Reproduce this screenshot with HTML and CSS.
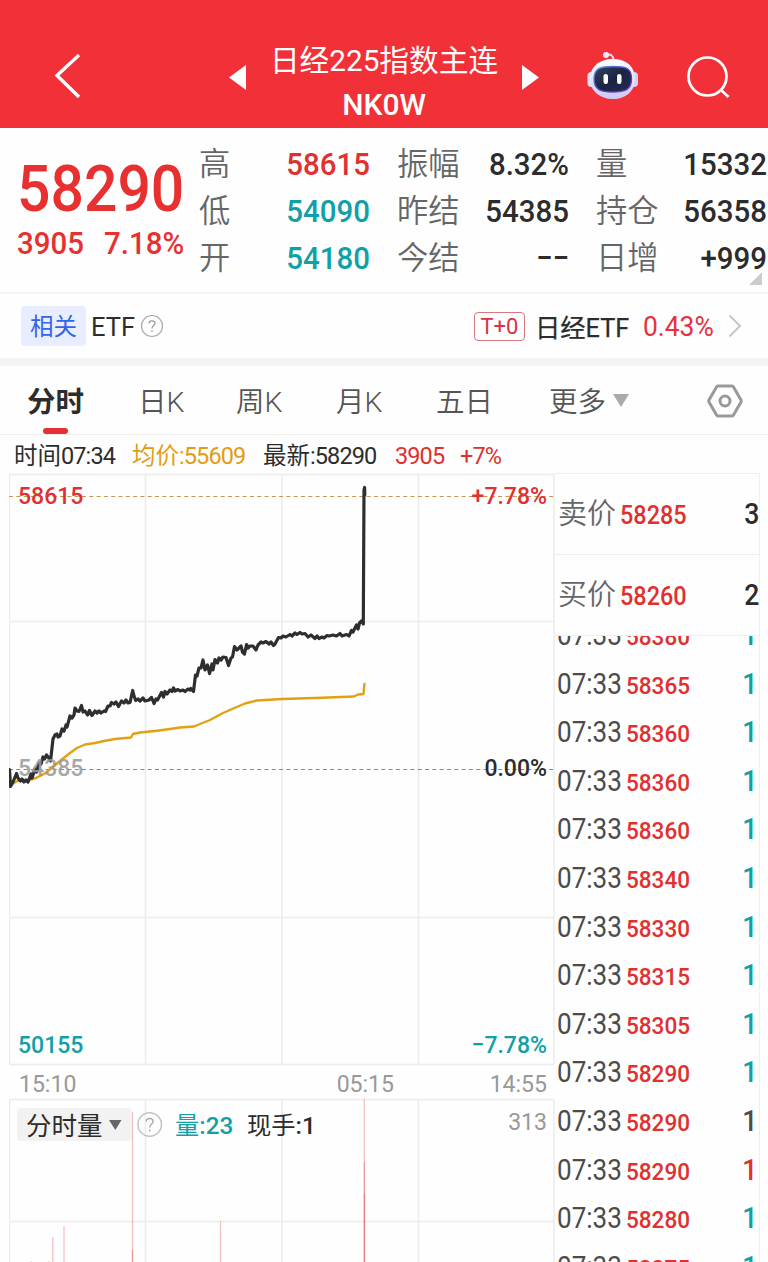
FILE: index.html
```html
<!DOCTYPE html>
<html lang="zh-CN">
<head>
<meta charset="utf-8">
<title>日经225指数主连</title>
<link rel="stylesheet" href="styles.css">
</head>
<body>
<div class="screen">
  <header class="topbar">
    <svg class="back" viewBox="0 0 30 48"><path d="M26 3 4 23.5 26 45" fill="none" stroke="#fff" stroke-width="3.4"/></svg>
    <svg class="prev" viewBox="0 0 17 25"><path d="M17 0V25L0 12.500z" fill="#fff"/></svg>
    <div class="title"><div>日经225指数主连</div><div class="code">NK0W</div></div>
    <svg class="next" viewBox="0 0 17 25"><path d="M0 0V25L17 12.500z" fill="#fff"/></svg>
    <svg class="robot" viewBox="0 0 54 50">
      <defs>
        <linearGradient id="shell" x1="0" y1="0" x2="0" y2="1"><stop offset="0" stop-color="#fff"/><stop offset="1" stop-color="#cbc9f2"/></linearGradient>
        <linearGradient id="face" x1="0" y1="0" x2="1" y2="1"><stop offset="0" stop-color="#34435f"/><stop offset=".5" stop-color="#1c2444"/><stop offset="1" stop-color="#222b50"/></linearGradient>
        <linearGradient id="rim" x1="0" y1="0" x2="1" y2="1"><stop offset="0" stop-color="#55a8e0"/><stop offset=".6" stop-color="#5934c4"/><stop offset="1" stop-color="#8c3ee0"/></linearGradient>
      </defs>
      <path d="M20 5Q27 3 27.500 10" fill="none" stroke="#ecdff5" stroke-width="2"/>
      <circle cx="20" cy="5" r="3" fill="#f4e8fa"/>
      <rect x="1.500" y="22" width="9" height="15" rx="4" fill="#e5e2f8"/><rect x="43" y="22" width="9" height="15" rx="4" fill="#d4d1f2"/>
      <path d="M27 9C41 9 49 17 49 29S40 49 27 49 4 41 4 29 13 9 27 9z" fill="url(#shell)"/>
      <path d="M27 16.500C40 16.500 45.500 18 45.500 29S39 42 27 42 8 40 8 29 14 16.500 27 16.500z" fill="url(#face)" stroke="url(#rim)" stroke-width="1.300"/>
      <rect x="17.500" y="24" width="4.500" height="10" rx="2.200" fill="#fff"/><rect x="31" y="24" width="4.500" height="10" rx="2.200" fill="#fff"/>
    </svg>
    <svg class="search" viewBox="0 0 46 46"><circle cx="21.500" cy="21.500" r="19" fill="none" stroke="#fff" stroke-width="2.700"/><path d="m35 35 7.500 7" stroke="#fff" stroke-width="2.700"/></svg>
  </header>

  <section class="quote">
    <div class="last"><div class="price">58290</div><div class="change"><span>3905</span><span>7.18%</span></div></div>
    <div class="stats">
      <span class="k">高</span><span class="v up">58615</span><span class="k">振幅</span><span class="v">8.32%</span><span class="k">量</span><span class="v">15332</span>
      <span class="k">低</span><span class="v down">54090</span><span class="k">昨结</span><span class="v">54385</span><span class="k">持仓</span><span class="v">56358</span>
      <span class="k">开</span><span class="v down">54180</span><span class="k">今结</span><span class="v dash">−−</span><span class="k">日增</span><span class="v">+999</span>
    </div>
    <i class="corner"></i>
  </section>

  <section class="etf">
    <span class="tag">相关</span><span class="etf-name">ETF</span>
    <svg class="help" viewBox="0 0 24 24"><circle cx="12" cy="12" r="10.500" fill="none" stroke="#aaa" stroke-width="1.200"/><path d="M9 9.500Q9 6.800 12 6.800T15 9.500C15 11.500 12 11.500 12 14.500M12 16v1.700" fill="none" stroke="#999" stroke-width="1.200"/></svg>
    <span class="t0">T+0</span><span class="etf-link">日经ETF</span><span class="etf-pct">0.43%</span>
    <svg class="chev" viewBox="0 0 14 24"><path d="m1.500 1.500 10.500 10.500L1.500 22.500" fill="none" stroke="#c6c6c6" stroke-width="2"/></svg>
  </section>

  <nav class="tabs">
    <span class="active">分时</span><span>日K</span><span>周K</span><span>月K</span><span>五日</span><span>更多<i class="tri"></i></span>
    <svg class="gear" viewBox="0 0 36 34"><path d="M11 2H25Q26 2 26.500 3L34 16Q34.500 17 34 18L26.500 31Q26 32 25 32H11Q10 32 9.500 31L2 18Q1.500 17 2 16L9.500 3Q10 2 11 2z" fill="none" stroke="#999" stroke-width="3"/><circle cx="18" cy="17" r="5" fill="none" stroke="#999" stroke-width="3"/></svg>
  </nav>

  <div class="info"><span>时间<b>07:34</b></span><span class="avg">均价<b>:55609</b></span><span>最新<b>:58290</b></span><span class="up"><b>3905</b></span><span class="up"><b>+7%</b></span></div>

  <main class="market">
    <svg class="chart" viewBox="9 473 546 789">
      <g class="grid">
        <path d="M9 474.500H554M9 621.500H554M9 917.500H554M9 1064.500H554M9 1099.500H554M9 1221.500H554"/>
        <path d="M9.500 474V1064M145.500 474V1064M282 474V1064M418.500 474V1064M554 474V1064M9.500 1100V1262M145.500 1100V1262M282 1100V1262M418.500 1100V1262M554 1100V1262"/>
      </g>
      <path class="limit" d="M9 496.500H554"/>
      <path class="zero" d="M9 769.500H554"/>
      <path class="avgline" d="M10 784L14 783 19 780 25 781 36 778 45 773.500 53 767 58 762.500 65 757 70 753 77 748 85 744.500 95 743 104 741 115 739 131 737.500 133 734 140 732.500 155 731 170 729 180 727.500 194 726.500 200 724 210 720 222 713.500 232 709 245 703.500 257 700.500 282 699 315 698 354 696.500 358 694.500 363.500 694 364.500 683"/>
      <path class="priceline" d="M9.500 769.500L10.500 786.500 13 782 16.500 773.500 18 778 20.500 781 22 779 24 782 26 780 28 782 31 774 32 778 35 769 36.500 772 39 763 41 764 43 757 44.500 759 46.500 755 48 757 50.500 761 53 739 55 735 57 734 58 737 60 736 62 729 64 731 66 725 67 727 70 716 72 718 74 715 75 708 77 711 79 711.500 81.500 705.500 83 712 85 711 87.500 715 89.500 710.500 91 714 92 715.500 95 711 97 713 99 711 101 713 104 711 105.500 711.500 108 706 110 706 111.500 702.500 114 704 116 702 118.500 706.500 121.500 701 124 703 126 700 128 703 130 702.500 131 698 132.700 690.500 134 696 135.700 700.500 138 699 140 701 143 698 145 701 147 700.500 149 700 151.500 697.500 154 703.500 156 699 157.500 700 161.500 692.500 163.500 697 165 691.500 167 694 170 690 172 691.500 173.500 688 175 691 178 689.500 180 691 183 690 185 691.500 188 689 190 690 191 688.500 193.500 691.500 195.500 675 197 676 199 668 201 668 203 660 205 670 207.500 665 209.500 673.500 212 664 213 670 215 659.500 217.500 663 219 658 221 660 223 657 226 657.500 228.500 665.500 231 658 232.500 657 234.500 646.500 237 650 239 648 241 646 242.500 652 244.500 654 246.500 644.500 248 648 250 646 253 646 256 650 258 645 261 642 263 643 266 641.500 269 644 271 642 273.500 645.500 275 644 278.500 637.500 281 638 283 636 286 637 290 634.500 292 636 295 633 297 634.500 300 632.500 302 634 305 633.500 308 637 311 635 315 638.500 317 636 319 638.500 322 637 324 638 327 635.500 329 636 333 635 336.500 636 340 633.500 342 636 346.500 634.500 349 636 351.500 630.500 353 632 356.500 625 358 629 359.500 623 361.500 621 363.300 624 364 490 364.600 487.500 364.800 495"/>
      <text class="t gray mid" x="18" y="776">54385</text>
      <text class="t up" x="18" y="504">58615</text>
      <text class="t up end" x="547" y="504">+7.78%</text>
      <text class="t dark end" x="547" y="776">0.00%</text>
      <text class="t down" x="18" y="1053">50155</text>
      <text class="t down end" x="547" y="1053">−7.78%</text>
      <text class="t gray" x="19" y="1092">15:10</text>
      <text class="t gray end" x="394" y="1092">05:15</text>
      <text class="t gray end" x="547" y="1092">14:55</text>
      <text class="t gray end" x="547" y="1130">313</text>
      <g class="bars">
        <path d="M52.800 1237V1262M64 1226V1262M132.500 1112V1262M220.500 1221V1262M364.300 1099V1262"/>
        <path d="M31 1261V1262M49 1261V1262M132.500 1250V1262M364.300 1162V1262"/>
        <path d="M364.500 1194V1262"/>
      </g>
      <rect x="17" y="1108" width="115" height="33" rx="4" fill="#f2f2f2"/>
      <text class="vtitle" x="26" y="1135">分时量</text>
      <path d="M109 1120H121.500L115.300 1130z" fill="#666"/>
      <circle cx="149.700" cy="1124.500" r="11.800" fill="none" stroke="#c2c2c2" stroke-width="1.500"/>
      <path d="M146.300 1121.500Q146.300 1118.500 149.700 1118.500T153.100 1121.500C153.100 1124 149.700 1124 149.700 1127.500M149.700 1129.500v2" fill="none" stroke="#aaa" stroke-width="1.400"/>
      <text class="vtext down" x="175" y="1134">量<tspan>:23</tspan></text>
      <text class="vtext dark" x="247" y="1134">现手<tspan>:1</tspan></text>
    </svg>
    <aside class="book">
      <div class="order"><span class="k">卖价</span><span class="p">58285</span><span class="n">3</span></div>
      <div class="order"><span class="k">买价</span><span class="p">58260</span><span class="n">2</span></div>
      <div class="ticks"><div class="ticklist">
        <div class="tick"><span>07:33</span><span class="p">58380</span><span class="n down">1</span></div>
        <div class="tick"><span>07:33</span><span class="p">58365</span><span class="n down">1</span></div>
        <div class="tick"><span>07:33</span><span class="p">58360</span><span class="n down">1</span></div>
        <div class="tick"><span>07:33</span><span class="p">58360</span><span class="n down">1</span></div>
        <div class="tick"><span>07:33</span><span class="p">58360</span><span class="n down">1</span></div>
        <div class="tick"><span>07:33</span><span class="p">58340</span><span class="n down">1</span></div>
        <div class="tick"><span>07:33</span><span class="p">58330</span><span class="n down">1</span></div>
        <div class="tick"><span>07:33</span><span class="p">58315</span><span class="n down">1</span></div>
        <div class="tick"><span>07:33</span><span class="p">58305</span><span class="n down">1</span></div>
        <div class="tick"><span>07:33</span><span class="p">58290</span><span class="n down">1</span></div>
        <div class="tick"><span>07:33</span><span class="p">58290</span><span class="n">1</span></div>
        <div class="tick"><span>07:33</span><span class="p">58290</span><span class="n up">1</span></div>
        <div class="tick"><span>07:33</span><span class="p">58280</span><span class="n down">1</span></div>
        <div class="tick"><span>07:33</span><span class="p">58275</span><span class="n down">1</span></div>
      </div></div>
    </aside>
  </main>
</div>
</body>
</html>
```
FILE: styles.css
```css
* { box-sizing: border-box; }
body { margin: 0; background: #fefefe; }
.screen {
  width: 768px; height: 1262px; overflow: hidden; background: #fefefe; color: #2c2c2c;
  font-family: Roboto, "Noto Sans CJK SC", sans-serif; white-space: nowrap;
}
svg { display: block; flex: none; }
.up { color: #e03030; fill: #e03030; }
.down { color: #10a0a8; fill: #10a0a8; }
.dark { fill: #2c2c2c; }

.topbar { height: 128px; background: #f23038; color: #fff; display: flex; align-items: flex-start; }
.back { width: 30px; height: 48px; margin: 52px 0 0 53px; }
.prev { width: 17px; height: 25px; margin: 65px 0 0 146px; }
.title { width: 276px; padding-top: 38px; text-align: center; font-size: 29.7px; line-height: 45px; }
.title .code { line-height: 43px; font-size: 30px; font-weight: 500; }
.next { width: 17px; height: 25px; margin: 65px 0 0 0; }
.robot { width: 54px; height: 50px; margin: 50px 0 0 47px; }
.search { width: 46px; height: 46px; margin: 55px 0 0 46px; }

/* Condensed numerals */
.price, .change span, .stats .v, .etf-pct, .p, .n, .tick span:first-child { transform: scaleX(.92); transform-origin: left; }
.stats .v, .n { transform-origin: right; }

.quote { position: relative; height: 166px; border-bottom: 2px solid #f5f5f5; display: flex; }
.last { width: 199px; padding: 27px 0 0 17px; color: #e83030; }
.price { font-size: 64px; line-height: 70px; font-weight: 500; }
.change { display: flex; gap: 14px; font-size: 32px; line-height: 36px; font-weight: 500; }
.stats { display: grid; grid-template-columns: 70px 101px 95px 104px 95px 103px; grid-auto-rows: 47px; padding-top: 13px; line-height: 47px; font-size: 32px; }
.stats .k { color: #666; font-weight: 350; font-size: 31.3px; }
.stats .v { text-align: right; font-weight: 500; }
.stats .k:nth-child(6n+3), .stats .k:nth-child(6n+5) { padding-left: 27px; }
.corner { position: absolute; right: 6px; bottom: 7px; border-left: 13px solid transparent; border-bottom: 13px solid #ccc; }

.etf { height: 64px; padding: 0 26px 0 21px; display: flex; align-items: center; font-size: 25.5px; }
.tag { width: 65px; height: 40px; border-radius: 4px; background: #e8eeff; color: #3564e8; font-size: 23.5px; line-height: 42px; text-align: center; }
.etf-name { margin-left: 5px; padding-top: 2px; }
.help { width: 24px; height: 24px; margin-left: 5px; }
.t0 { width: 51px; height: 29px; margin-left: auto; border: 1px solid #d87880; border-radius: 4px; color: #dc3040; font-size: 22px; line-height: 28px; text-align: center; }
.etf-link { margin-left: 10px; font-size: 25.3px; -webkit-text-stroke: .25px; }
.etf-pct { margin-left: 11px; color: #e83040; font-size: 27.5px; transform: scaleX(.96); transform-origin: right; }
.chev { width: 14px; height: 24px; margin-left: 14px; }

.tabs { height: 77px; border-top: 8px solid #f4f4f4; border-bottom: 1px solid #f0f0f0; padding-left: 27px; display: grid; grid-template-columns: 111px 98px 100px 100px 113px 158px 36px; grid-template-rows: 68px; font-size: 28.500px; line-height: 74px; font-weight: 350; color: #555; }
.active { position: relative; font-weight: 700; color: #2c2c2c; }
.active::after { content: ""; position: absolute; left: 16px; bottom: 0; width: 25px; height: 6px; border-radius: 3px; background: #e53035; }
.tri { display: inline-block; margin-left: 7px; vertical-align: 5px; border: 8px solid transparent; border-top: 13px solid #aaa; border-bottom: 0; }
.gear { width: 36px; height: 34px; margin-top: 18px; }

.info { height: 38px; padding-left: 14px; display: grid; grid-template-columns: 118px 131px 132px 65px 60px; font-size: 23.5px; line-height: 43px; }
.info b { font-weight: 450; letter-spacing: -.9px; }
.avg { color: #e39c12; }

.market { display: flex; height: 789px; padding-left: 9px; }
.chart { width: 546px; height: 789px; }
.grid { fill: none; stroke: #ececec; stroke-width: 1.5; }
.limit, .zero { fill: none; stroke-width: 1; stroke-dasharray: 4 3.3; }
.limit { stroke: #c79550; }
.zero { stroke: #888; }
.avgline { fill: none; stroke: #e5a011; stroke-width: 2.4; stroke-linejoin: round; }
.priceline { fill: none; stroke: #2e2e2e; stroke-width: 3.2; stroke-linejoin: round; stroke-linecap: round; }
.t { font-size: 24.5px; font-weight: 500; transform-box: fill-box; transform: scaleX(.94); transform-origin: left; }
.gray { fill: #999; font-weight: 450; }
.mid { opacity: .85; font-weight: 500; }
.end { text-anchor: end; transform-origin: right; }
.vtitle { font-size: 25.5px; fill: #2c2c2c; }
.vtext { font-size: 24.3px; }
.vtext tspan { font-weight: 500; }
.bars { fill: none; stroke: #d83030; stroke-width: 1.2; stroke-opacity: .3; }

.book { width: 205px; border-top: 1px solid #f0f0f0; border-right: 1.5px solid #f0f0f0; }
.order, .tick { display: flex; align-items: baseline; }
.order { height: 81px; line-height: 80px; padding-left: 3px; border-bottom: 1px solid #eee; }
.order .k { width: 62px; font-size: 29px; font-weight: 350; color: #666; }
.p { color: #e03030; font-size: 25.5px; font-weight: 500; }
.n { margin-left: auto; font-weight: 500; font-size: 29px; }
.ticks { height: 626px; overflow: hidden; }
.ticklist { margin-top: -25px; }
.tick { height: 48.6px; line-height: 48.600px; padding: 0 2px 0 2px; font-size: 29.3px; color: #4b4b4b; }
.tick span:first-child { width: 69px; transform: scaleX(.89); font-weight: 450; }
.tick .p { font-size: 24.5px; }
```
